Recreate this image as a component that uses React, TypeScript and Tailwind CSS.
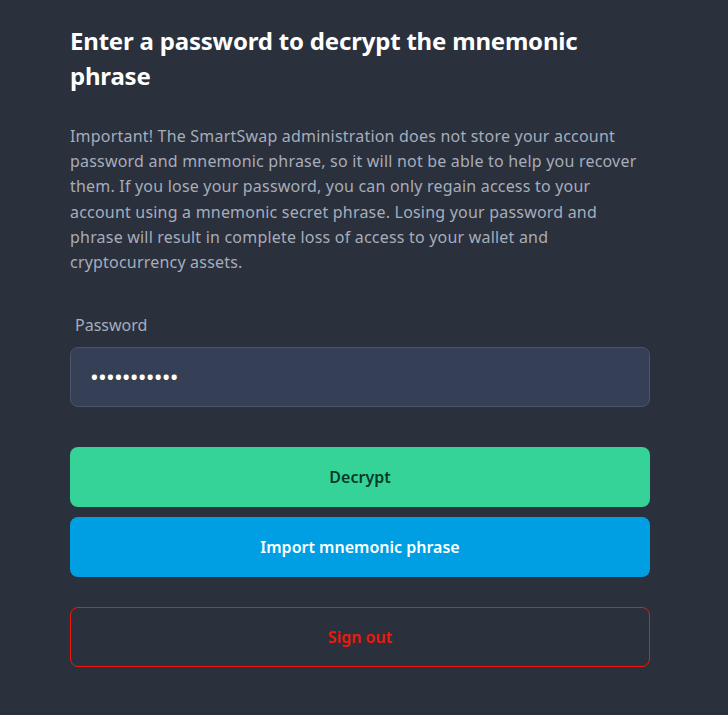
import React from "react";

export default function App() {
  return (
    <div
      className="min-h-[715px] w-full bg-[#2a303c]"
      style={{ fontFamily: '"Segoe UI", "Noto Sans", "Open Sans", sans-serif' }}
    >
      <div className="ml-[70px] w-[580px] pt-[23px]">
        <h1 className="text-[24px] font-bold leading-[35px] tracking-[-0.2px] text-white">
          Enter a password to decrypt the mnemonic phrase
        </h1>
        <p className="mt-[31px] text-[16px] leading-[25.2px] tracking-[0.2px] text-[#a6adbb]">
          Important! The SmartSwap administration does not store your account password and mnemonic phrase, so it will not be able to help you recover them. If you lose your password, you can only regain access to your account using a mnemonic secret phrase. Losing your password and phrase will result in complete loss of access to your wallet and cryptocurrency assets.
        </p>
        <label className="mt-[38px] block pl-[5px] text-[16px] leading-[24px] text-[#a6adbb]">
          Password
        </label>
        <div className="mt-[10px] flex h-[60px] items-center rounded-[8px] border border-[#4b5468] bg-[#353f56] px-[20px]">
          <span className="text-[18px] font-bold tracking-[1.2px] text-white">•••••••••••</span>
        </div>
        <div className="mt-[40px] flex flex-col gap-[10px]">
          <button className="flex h-[60px] items-center justify-center rounded-[8px] bg-[#36d399] text-[16px] font-semibold text-[#083a27]">
            Decrypt
          </button>
          <button className="flex h-[60px] items-center justify-center rounded-[8px] bg-[#009fe3] text-[16px] font-semibold text-white">
            Import mnemonic phrase
          </button>
        </div>
        <button className="mt-[30px] flex h-[60px] w-full items-center justify-center rounded-[8px] border border-[#f0190a] bg-transparent text-[16px] font-semibold text-[#f0190a]">
          Sign out
        </button>
      </div>
    </div>
  );
}
